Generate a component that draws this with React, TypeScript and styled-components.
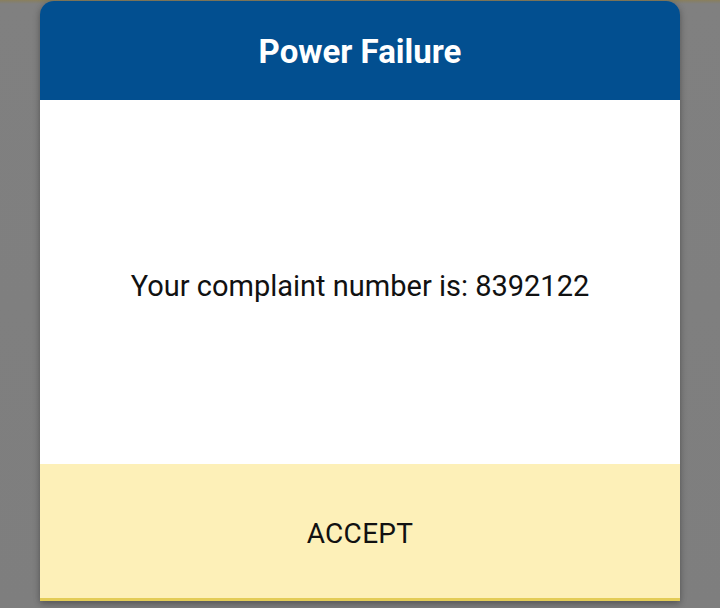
import React from "react";
import styled, { createGlobalStyle } from "styled-components";

const GlobalStyle = createGlobalStyle`
  html, body { margin: 0; padding: 0; }
  body {
    width: 720px;
    height: 608px;
    overflow: hidden;
    background: #7f7f7f;
    font-family: Roboto, "Noto Sans", "Liberation Sans", sans-serif;
  }
`;

const Screen = styled.div`
  width: 720px;
  height: 608px;
  display: flex;
  flex-direction: column;
  align-items: center;
  background: linear-gradient(to bottom, #8a805c 0px, #837f70 2px, #808080 4px, #7e7e7e 100%);
`;

const Dialog = styled.div`
  margin-top: 1px;
  width: 640px;
  display: flex;
  flex-direction: column;
  border-radius: 14px 14px 0 0;
  overflow: hidden;
  box-shadow: 0 3px 6px rgba(0, 0, 0, 0.25), 0 0 8px rgba(0, 0, 0, 0.12);
`;

const Header = styled.div`
  height: 99px;
  padding-top: 2px;
  box-sizing: border-box;
  background: #024f90;
  display: flex;
  align-items: center;
  justify-content: center;
  color: #ffffff;
  font-size: 33px;
  font-weight: 700;
`;

const Body = styled.div`
  height: 364px;
  padding-top: 8px;
  box-sizing: border-box;
  background: #ffffff;
  display: flex;
  align-items: center;
  justify-content: center;
  color: #111111;
  font-size: 29px;
`;

const Footer = styled.button`
  height: 137px;
  box-sizing: border-box;
  border: none;
  border-bottom: 3px solid #e3cc56;
  background: #fdf0b8;
  display: flex;
  align-items: center;
  justify-content: center;
  color: #111111;
  font-family: inherit;
  font-size: 28px;
  padding: 5px 0 0;
  letter-spacing: 0.3px;
`;

export default function App() {
  return (
    <>
      <GlobalStyle />
      <Screen>
        <Dialog>
          <Header>Power Failure</Header>
          <Body>Your complaint number is: 8392122</Body>
          <Footer>ACCEPT</Footer>
        </Dialog>
      </Screen>
    </>
  );
}
